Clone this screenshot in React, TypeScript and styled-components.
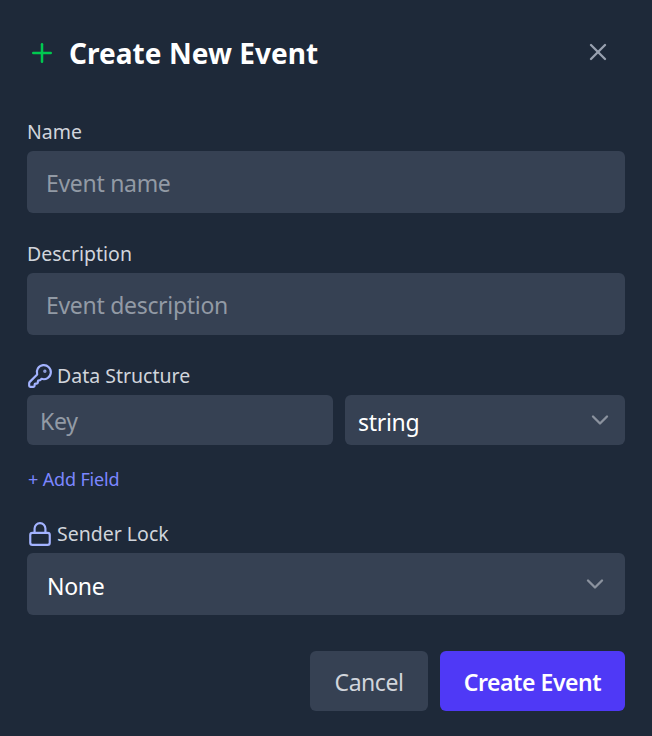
import * as React from "react";
import styled, { createGlobalStyle } from "styled-components";
import { ChevronDown, KeyRound, Lock, Plus, X } from "lucide-react";

const GlobalStyle = createGlobalStyle`
  html, body {
    margin: 0;
    padding: 0;
    background: #1e2939;
  }
  * {
    box-sizing: border-box;
  }
`;

const Modal = styled.div`
  width: 652px;
  height: 736px;
  padding: 0 27px;
  background: #1e2939;
  font-family: "Noto Sans", "Open Sans", sans-serif;
  display: flex;
  flex-direction: column;
`;

const Header = styled.div`
  height: 106px;
  display: flex;
  align-items: center;
  justify-content: space-between;
`;

const TitleRow = styled.div`
  display: flex;
  align-items: center;
  gap: 12px;
`;

const Title = styled.h2`
  margin: 0;
  color: #ffffff;
  font-size: 28px;
  font-weight: 700;
  line-height: 36px;
  letter-spacing: 0.05px;
`;

const CloseButton = styled.button`
  border: none;
  background: none;
  padding: 0;
  width: 30px;
  height: 30px;
  margin: 0 12px 2px 0;
  color: #99a1af;
  display: flex;
  align-items: center;
  justify-content: center;
`;

const Field = styled.div<{ $spaced?: boolean }>`
  display: flex;
  flex-direction: column;
  margin-top: ${(p) => (p.$spaced ? "15px" : "0")};
`;

const Label = styled.label`
  height: 26px;
  margin-top: 14px;
  padding-bottom: 2px;
  color: #d1d5dc;
  font-size: 19.5px;
  line-height: 24px;
  display: flex;
  align-items: center;
  gap: 4px;
`;

const TextInput = styled.input<{ $compact?: boolean }>`
  width: ${(p) => (p.$compact ? "306px" : "100%")};
  height: ${(p) => (p.$compact ? "50px" : "62px")};
  margin-top: 5px;
  padding: 1px ${(p) => (p.$compact ? "13px" : "19px")} 0;
  background: #364153;
  border: none;
  border-radius: 6px;
  outline: none;
  color: #ffffff;
  font-family: inherit;
  font-size: 23px;
  letter-spacing: -0.3px;

  &::placeholder {
    color: #929aa5;
    opacity: 1;
  }
`;

const SelectBox = styled.div<{ $compact?: boolean }>`
  flex: ${(p) => (p.$compact ? "1" : "none")};
  height: ${(p) => (p.$compact ? "50px" : "62px")};
  margin-top: 5px;
  padding: ${(p) => (p.$compact ? "0 11px 0 13px" : "0 16px 0 20px")};
  background: #364153;
  border-radius: 6px;
  color: #ffffff;
  font-size: 23px;
  letter-spacing: -0.3px;
  display: flex;
  align-items: center;
  justify-content: space-between;
`;

const SelectValue = styled.span`
  padding-top: 3px;
`;

const DataRow = styled.div`
  display: flex;
  gap: 12px;
`;

const AddField = styled.button`
  align-self: flex-start;
  margin-top: 22px;
  margin-bottom: 17px;
  padding: 0 0 0 1px;
  border: none;
  background: none;
  color: #7c86ff;
  font-family: inherit;
  font-size: 18px;
  line-height: 24px;
  letter-spacing: -0.15px;
`;

const Footer = styled.div`
  margin-top: 36px;
  display: flex;
  justify-content: flex-end;
  gap: 12px;
`;

const ActionButton = styled.button<{ $primary?: boolean }>`
  height: 60px;
  width: ${(p) => (p.$primary ? "185px" : "118px")};
  padding: 2px 0 0;
  border: none;
  border-radius: 6px;
  background: ${(p) => (p.$primary ? "#4f39f6" : "#364153")};
  color: ${(p) => (p.$primary ? "#ffffff" : "#d1d5dc")};
  font-family: inherit;
  font-size: 23px;
  font-weight: ${(p) => (p.$primary ? 600 : 400)};
  letter-spacing: -0.45px;
`;

export default function App() {
  return (
    <Modal>
      <GlobalStyle />
      <Header>
        <TitleRow>
          <Plus size={30} color="#00c950" strokeWidth={2} />
          <Title>Create New Event</Title>
        </TitleRow>
        <CloseButton>
          <X size={28} strokeWidth={2} />
        </CloseButton>
      </Header>

      <Field>
        <Label>Name</Label>
        <TextInput placeholder="Event name" />
      </Field>
      <Field $spaced>
        <Label>Description</Label>
        <TextInput placeholder="Event description" />
      </Field>
      <Field $spaced>
        <Label>
          <KeyRound size={26} color="#a3b3ff" strokeWidth={2} />
          Data Structure
        </Label>
        <DataRow>
          <TextInput $compact placeholder="Key" />
          <SelectBox $compact>
            <SelectValue>string</SelectValue>
            <ChevronDown size={28} color="#8b929e" strokeWidth={2} />
          </SelectBox>
        </DataRow>
      </Field>
      <AddField>+ Add Field</AddField>
      <Field>
        <Label>
          <Lock size={26} color="#a3b3ff" strokeWidth={2} />
          Sender Lock
        </Label>
        <SelectBox>
          <SelectValue>None</SelectValue>
          <ChevronDown size={28} color="#8b929e" strokeWidth={2} />
        </SelectBox>
      </Field>
      <Footer>
        <ActionButton>Cancel</ActionButton>
        <ActionButton $primary>Create Event</ActionButton>
      </Footer>
    </Modal>
  );
}
